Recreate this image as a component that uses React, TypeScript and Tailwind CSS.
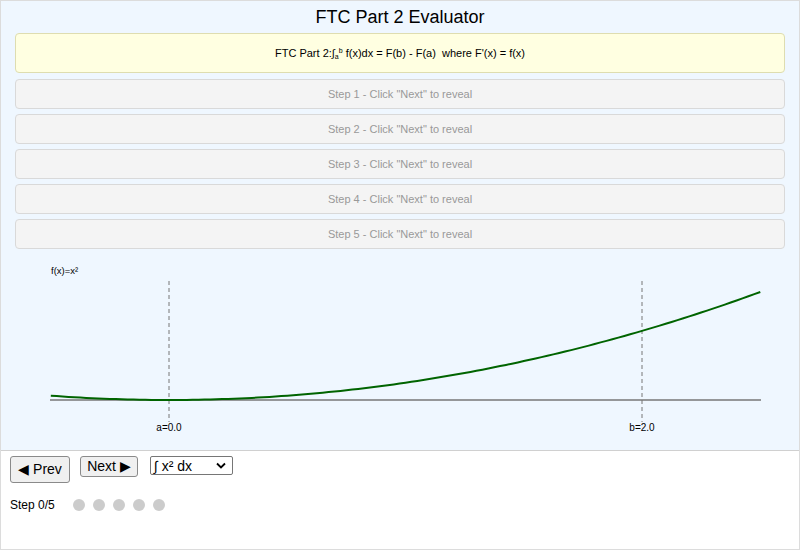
import React from "react";

const steps = [1, 2, 3, 4, 5];

function Chart() {
  // x in [-0.5, 2.5] mapped to pixels; a=0 at 168, b=2 at 641
  const sx = (x: number) => 168 + 236.5 * x;
  const sy = (y: number) => 144 - 17.28 * y;
  const pts: string[] = [];
  for (let i = 0; i <= 120; i++) {
    const x = -0.5 + (3 * i) / 120;
    pts.push(`${sx(x).toFixed(1)},${sy(x * x).toFixed(1)}`);
  }

  return (
    <svg width="800" height="195" viewBox="0 0 800 195" className="block">
      <text x="50" y="18" fontSize="9.5" fill="#000" fontFamily="Liberation Sans, Arial, sans-serif">
        f(x)=x²
      </text>
      <line x1="49" y1="144" x2="760" y2="144" stroke="#777" strokeWidth="1.5" />
      <line x1="168" y1="25" x2="168" y2="166" stroke="#777" strokeWidth="1" strokeDasharray="4 3" />
      <line x1="641" y1="25" x2="641" y2="166" stroke="#777" strokeWidth="1" strokeDasharray="4 3" />
      <polyline points={pts.join(" ")} fill="none" stroke="#006400" strokeWidth="2" />
      <text x="168" y="175" fontSize="10" textAnchor="middle" fill="#000" fontFamily="Liberation Sans, Arial, sans-serif">
        a=0.0
      </text>
      <text x="641" y="175" fontSize="10" textAnchor="middle" fill="#000" fontFamily="Liberation Sans, Arial, sans-serif">
        b=2.0
      </text>
    </svg>
  );
}

export default function App() {
  return (
    <div className="h-[550px] w-[800px] overflow-hidden border border-[#dcdcdc] bg-white font-['Liberation_Sans',Arial,sans-serif] text-black">
      {/* TOP PANEL */}
      <div className="h-[449px] bg-[#eff7ff]">
        <h1 className="pt-[5px] text-center text-[18px] leading-[22px]">FTC Part 2 Evaluator</h1>

        <div className="mx-[14px] mt-[5px] flex h-[40px] items-center justify-center rounded-[4px] border border-[#deddb0] bg-[#ffffe1] text-[11px]">
          <span>
            FTC Part 2:∫
            <sub className="text-[7px]">a</sub>
            <sup className="text-[7px]">b</sup> f(x)dx = F(b) - F(a)&nbsp; where F'(x) = f(x)
          </span>
        </div>

        <div className="mx-[14px] mt-[6px] flex flex-col gap-[5px]">
          {steps.map((n) => (
            <div
              key={n}
              className="flex h-[30px] items-center justify-center rounded-[4px] border border-[#d9d9d9] bg-[#f4f4f4] text-[11px] text-[#999]"
            >
              Step {n} - Click "Next" to reveal
            </div>
          ))}
        </div>

        <div className="mt-[7px]">
          <Chart />
        </div>
      </div>

      {/* CONTROLS */}
      <div className="border-t border-[#d0d0d0] px-[9px] pt-[5px]">
        <div className="flex items-start">
          <button className="flex h-[27px] w-[60px] items-center justify-center rounded-[3px] border border-[#8a8a8a] bg-[#f0f0f0] text-[14px]">
            ◀ Prev
          </button>
          <button className="ml-[10px] flex h-[21px] w-[58px] items-center justify-center rounded-[3px] border border-[#8a8a8a] bg-[#f0f0f0] text-[14px]">
            Next ▶
          </button>
          <div className="ml-[12px] flex h-[19px] w-[83px] items-center justify-between rounded-[2px] border border-[#767676] bg-white pl-[3px] pr-[6px] text-[14px] leading-none">
            <span>∫ x² dx</span>
            <svg width="10" height="7" viewBox="0 0 10 7">
              <path d="M1 1.5 L5 5.5 L9 1.5" fill="none" stroke="#000" strokeWidth="1.8" />
            </svg>
          </div>
        </div>

        <div className="mt-[13px] flex items-center">
          <span className="text-[12px]">Step 0/5</span>
          <div className="ml-[18px] flex gap-[8px]">
            {steps.map((n) => (
              <span key={n} className="h-[12px] w-[12px] rounded-full bg-[#cccccc]" />
            ))}
          </div>
        </div>
      </div>
    </div>
  );
}
